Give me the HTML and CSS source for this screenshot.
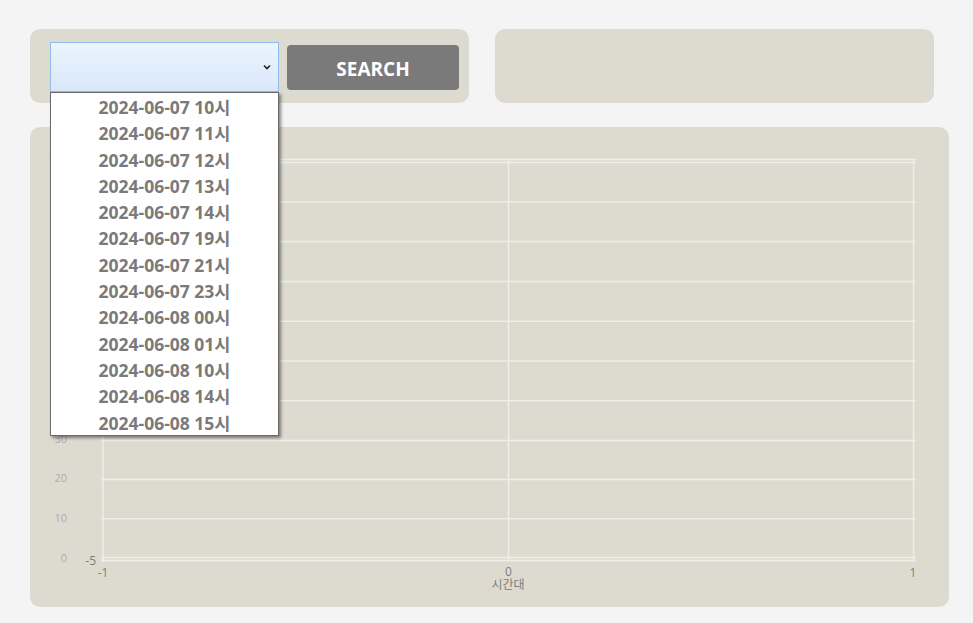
FILE: index.html
```html
<!DOCTYPE html>
<html lang="ko">
<head>
<meta charset="utf-8">
<title>Chart</title>
<link rel="stylesheet" href="styles.css">
</head>
<body>
<div class="top">
  <div class="panel search-panel">
    <div class="select-wrap">
      <div class="select">
        <svg class="chev" width="8" height="6" viewBox="0 0 8 6"><path d="M1 1.5 L4 4.5 L7 1.5" fill="none" stroke="#222" stroke-width="1.6"/></svg>
      </div>
      <ul class="dropdown">
        <li>2024-06-07 10시</li>
        <li>2024-06-07 11시</li>
        <li>2024-06-07 12시</li>
        <li>2024-06-07 13시</li>
        <li>2024-06-07 14시</li>
        <li>2024-06-07 19시</li>
        <li>2024-06-07 21시</li>
        <li>2024-06-07 23시</li>
        <li>2024-06-08 00시</li>
        <li>2024-06-08 01시</li>
        <li>2024-06-08 10시</li>
        <li>2024-06-08 14시</li>
        <li>2024-06-08 15시</li>
      </ul>
    </div>
    <button class="btn">SEARCH</button>
  </div>
  <div class="panel info-panel"></div>
</div>
<div class="panel chart-panel">
  <svg class="chart" width="919" height="480" viewBox="30 127 919 480">
    <g stroke="#efeee9" stroke-width="1.5" fill="none">
      <line x1="101" y1="159.5" x2="916" y2="159.5"/>
      <line x1="101" y1="162.5" x2="916" y2="162.5"/>
      <line x1="101" y1="201.8" x2="916" y2="201.8"/>
      <line x1="101" y1="241.6" x2="916" y2="241.6"/>
      <line x1="101" y1="281.4" x2="916" y2="281.4"/>
      <line x1="101" y1="321.2" x2="916" y2="321.2"/>
      <line x1="101" y1="361" x2="916" y2="361"/>
      <line x1="101" y1="400.8" x2="916" y2="400.8"/>
      <line x1="101" y1="440.6" x2="916" y2="440.6"/>
      <line x1="101" y1="479.4" x2="916" y2="479.4"/>
      <line x1="101" y1="518.7" x2="916" y2="518.7"/>
      <line x1="101" y1="557.5" x2="916" y2="557.5"/>
      <line x1="101" y1="560.5" x2="916" y2="560.5"/>
      <line x1="103" y1="159" x2="103" y2="562"/>
      <line x1="508.5" y1="159" x2="508.5" y2="562"/>
      <line x1="913.5" y1="159" x2="913.5" y2="562"/>
    </g>
    <g class="ylab" text-anchor="end">
      <text x="67" y="163">100</text>
      <text x="67" y="203">90</text>
      <text x="67" y="243">80</text>
      <text x="67" y="283">70</text>
      <text x="67" y="323">60</text>
      <text x="67" y="363">50</text>
      <text x="67" y="403">40</text>
      <text x="67" y="443">30</text>
      <text x="67" y="482">20</text>
      <text x="67" y="522">10</text>
      <text x="67" y="562">0</text>
    </g>
    <g class="xlab">
      <text x="96" y="565" text-anchor="end">-5</text>
      <text x="103" y="577" text-anchor="middle">-1</text>
      <text x="508.5" y="576" text-anchor="middle">0</text>
      <text x="913" y="577" text-anchor="middle">1</text>
      <text x="508" y="589" text-anchor="middle">시간대</text>
    </g>
  </svg>
</div>
</body>
</html>
```

FILE: styles.css
```css
html, body {
  margin: 0;
  padding: 0;
}
body {
  background: #f4f4f4;
  font-family: "Open Sans", "Noto Sans", "Noto Sans CJK KR", sans-serif;
  padding: 29px 0 0 30px;
  width: 943px;
  height: 594px;
  overflow: hidden;
}
.top {
  display: flex;
  gap: 26px;
}
.panel {
  background: #dddbd0;
  border-radius: 10px;
}
.search-panel {
  width: 439px;
  height: 74px;
  box-sizing: border-box;
  padding: 13px 0 0 20px;
  display: flex;
  align-items: flex-start;
  gap: 8px;
}
.info-panel {
  width: 439px;
  height: 74px;
}
.select-wrap {
  position: relative;
  width: 229px;
}
.select {
  height: 50px;
  box-sizing: border-box;
  border: 1px solid #8cbdec;
  background: linear-gradient(#ebf4fd, #d9e8fa);
  position: relative;
}
.chev {
  position: absolute;
  right: 7px;
  top: 21px;
}
.dropdown {
  position: absolute;
  left: 0;
  top: 50px;
  width: 229px;
  box-sizing: border-box;
  margin: 0;
  padding: 0;
  list-style: none;
  background: #fff;
  border: 1px solid #6b6b6b;
  box-shadow: 2px 2px 3px rgba(0, 0, 0, 0.45);
  z-index: 5;
}
.dropdown li {
  padding-top: 3px;
  height: 23.3px;
  line-height: 23.3px;
  text-align: center;
  font-size: 17.5px;
  font-weight: 700;
  color: #7a7a7a;
  font-family: "Open Sans", "Noto Sans CJK KR", sans-serif;
}
.btn {
  margin-top: 3px;
  width: 172px;
  height: 45px;
  border: none;
  border-radius: 4px;
  background: #7a7a7a;
  color: #fff;
  font-family: "Open Sans", "Noto Sans", sans-serif;
  font-weight: 700;
  font-size: 19px;
  padding: 2px 0 0;
}
.chart-panel {
  margin-top: 24px;
  width: 919px;
  height: 480px;
}
.chart {
  display: block;
}
.ylab text {
  font-family: "Open Sans", "Noto Sans", sans-serif;
  font-size: 11px;
  fill: #ababab;
}
.xlab text {
  font-family: "Open Sans", "Noto Sans", "Noto Sans CJK KR", sans-serif;
  font-size: 12px;
  fill: #7d7d7d;
}
```
